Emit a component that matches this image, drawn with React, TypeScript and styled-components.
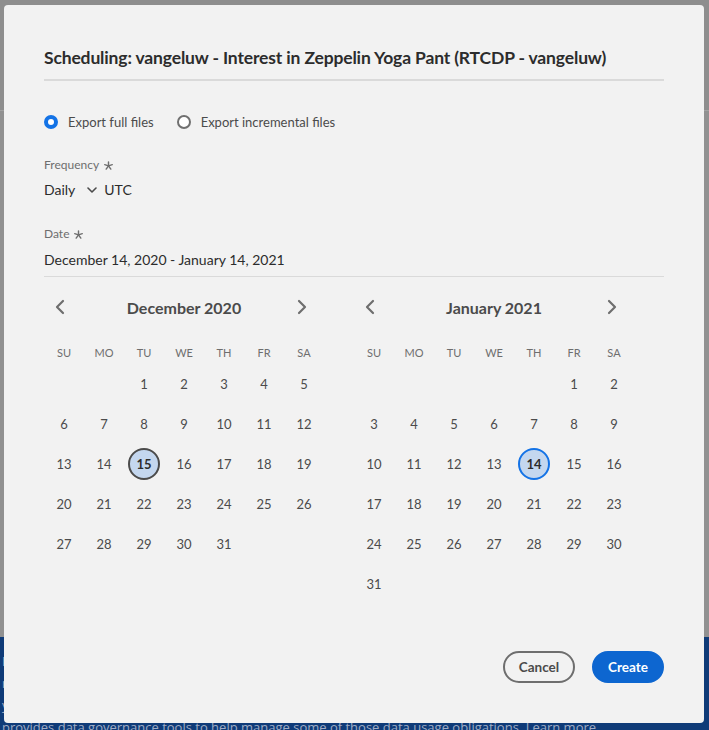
import React from "react";
import styled, { createGlobalStyle } from "styled-components";

const Global = createGlobalStyle`
  html, body { margin: 0; padding: 0; }
  body {
    background: #8f8f8f;
    font-family: Lato, "Open Sans", sans-serif;
    -webkit-font-smoothing: antialiased;
  }
`;

const Page = styled.div`
  position: relative;
  width: 709px;
  height: 730px;
  overflow: hidden;
  display: flex;
  flex-direction: column;
  background: #919191;
`;

const TopBand = styled.div`
  height: 110px;
  background: #8e8e8e;
  border-bottom: 1px solid #a2a2a2;
`;

const Filler = styled.div`
  flex: 1;
`;

const InfoBar = styled.div`
  height: 93px;
  box-sizing: border-box;
  background: #0f3b78;
  padding: 13px 0 0 2px;
  color: #9fabc4;
  font-family: "Open Sans", sans-serif;
  font-size: 13px;
  line-height: 22px;
  white-space: nowrap;
`;

const Dialog = styled.div`
  position: absolute;
  left: 4px;
  top: 5px;
  width: 700px;
  height: 718px;
  box-sizing: border-box;
  background: #f2f2f2;
  border-radius: 4px;
  padding: 40px 40px 40px 40px;
  display: flex;
  flex-direction: column;
  color: #4b4b4b;
`;

const Title = styled.h2`
  margin: 0;
  font-size: 17.5px;
  letter-spacing: -0.15px;
  line-height: 26px;
  font-weight: 700;
  color: #2c2c2c;
  white-space: nowrap;
`;

const Divider = styled.div`
  height: 2px;
  background: #dadada;
  margin-top: 8px;
`;

const RadioGroup = styled.div`
  display: flex;
  align-items: center;
  gap: 23px;
  height: 32px;
  margin-top: 25px;
`;

const RadioItem = styled.label`
  display: flex;
  align-items: center;
  gap: 10px;
  font-size: 13px;
  color: #4b4b4b;
`;

const RadioCircle = styled.span<{ $checked?: boolean }>`
  width: 14px;
  height: 14px;
  box-sizing: border-box;
  border-radius: 50%;
  background: #ffffff;
  border: ${(p) => (p.$checked ? "4px solid #1473e6" : "2px solid #707070")};
`;

const FieldLabel = styled.div<{ $top: number }>`
  display: flex;
  align-items: center;
  gap: 5px;
  margin-top: ${(p) => p.$top}px;
  font-size: 12px;
  line-height: 16px;
  color: #6e6e6e;
`;

const FieldValue = styled.div<{ $underline?: boolean }>`
  display: flex;
  align-items: center;
  margin-top: ${(p) => (p.$underline ? "8px" : "7px")};
  font-size: 14px;
  line-height: 20px;
  color: #2c2c2c;
  padding-bottom: ${(p) => (p.$underline ? "6px" : "0")};
  border-bottom: ${(p) => (p.$underline ? "1px solid #dadada" : "none")};
`;

const Chevron = styled.span`
  display: inline-flex;
  margin: 0 7px 0 12px;
`;

const Calendars = styled.div`
  display: flex;
  gap: 30px;
  margin-top: 14px;
`;

const Month = styled.div`
  width: 280px;
`;

const MonthNav = styled.div`
  display: flex;
  align-items: center;
  justify-content: space-between;
  height: 32px;
  padding-right: 6px;
`;

const NavButton = styled.span`
  width: 32px;
  height: 32px;
  display: flex;
  align-items: center;
  justify-content: center;
`;

const MonthTitle = styled.div`
  font-size: 16px;
  font-weight: 700;
  color: #4b4b4b;
  margin-left: 6px;
`;

const DayGrid = styled.div`
  display: grid;
  grid-template-columns: repeat(7, 40px);
  grid-template-rows: 24px;
  grid-auto-rows: 40px;
  margin-top: 17px;
`;

const WeekDay = styled.div`
  display: flex;
  align-items: center;
  justify-content: center;
  font-size: 11px;
  color: #6e6e6e;
`;

const Day = styled.div`
  display: flex;
  align-items: center;
  justify-content: center;
  font-size: 13px;
  color: #4b4b4b;
`;

const DayNum = styled.span<{ $sel?: "start" | "end" }>`
  width: 32px;
  height: 32px;
  box-sizing: border-box;
  border-radius: 50%;
  display: flex;
  align-items: center;
  justify-content: center;
  background: ${(p) => (p.$sel ? "#c4d7ef" : "transparent")};
  border: ${(p) =>
    p.$sel === "start" ? "2px solid #4b4b4b" : p.$sel === "end" ? "2px solid #1473e6" : "none"};
  font-weight: ${(p) => (p.$sel ? 700 : 400)};
  color: ${(p) => (p.$sel ? "#2c2c2c" : "#4b4b4b")};
`;

const Footer = styled.div`
  margin-top: auto;
  display: flex;
  justify-content: flex-end;
  gap: 17px;
`;

const Button = styled.button<{ $primary?: boolean }>`
  height: 32px;
  box-sizing: border-box;
  border-radius: 16px;
  padding: 0 14px;
  font-family: inherit;
  font-size: 13.5px;
  font-weight: 700;
  border: 2px solid ${(p) => (p.$primary ? "#0d66d0" : "#6e6e6e")};
  background: ${(p) => (p.$primary ? "#0d66d0" : "transparent")};
  color: ${(p) => (p.$primary ? "#ffffff" : "#4b4b4b")};
`;

const Asterisk = () => (
  <svg width="9" height="9" viewBox="0 0 10 10">
    {[0, 72, 144, 216, 288].map((a) => {
      const r = ((a - 90) * Math.PI) / 180;
      return (
        <line
          key={a}
          x1="5"
          y1="5.4"
          x2={5 + 4.4 * Math.cos(r)}
          y2={5.4 + 4.4 * Math.sin(r)}
          stroke="#6e6e6e"
          strokeWidth="1.6"
          strokeLinecap="round"
        />
      );
    })}
  </svg>
);

const ChevronDown = () => (
  <svg width="10" height="6" viewBox="0 0 10 6">
    <path d="M1 1 L5 5 L9 1" fill="none" stroke="#4b4b4b" strokeWidth="1.6" strokeLinecap="round" strokeLinejoin="round" />
  </svg>
);

const NavArrow = ({ dir }: { dir: "left" | "right" }) => (
  <svg width="12" height="16" viewBox="0 0 12 16">
    <path
      d={dir === "left" ? "M9 2 L3 8 L9 14" : "M3 2 L9 8 L3 14"}
      fill="none"
      stroke="#6e6e6e"
      strokeWidth="2.2"
      strokeLinecap="round"
      strokeLinejoin="round"
    />
  </svg>
);

const weekdays = ["SU", "MO", "TU", "WE", "TH", "FR", "SA"];

type MonthProps = {
  title: string;
  offset: number;
  days: number;
  start?: number;
  end?: number;
};

const MonthView = ({ title, offset, days, start, end }: MonthProps) => {
  const cells: (number | null)[] = [];
  for (let i = 0; i < offset; i++) cells.push(null);
  for (let d = 1; d <= days; d++) cells.push(d);
  return (
    <Month>
      <MonthNav>
        <NavButton>
          <NavArrow dir="left" />
        </NavButton>
        <MonthTitle>{title}</MonthTitle>
        <NavButton>
          <NavArrow dir="right" />
        </NavButton>
      </MonthNav>
      <DayGrid>
        {weekdays.map((w) => (
          <WeekDay key={w}>{w}</WeekDay>
        ))}
        {cells.map((d, i) => {
          const sel = d === start ? "start" : d === end ? "end" : undefined;
          return <Day key={i}>{d !== null && <DayNum $sel={sel}>{d}</DayNum>}</Day>;
        })}
      </DayGrid>
    </Month>
  );
};

export default function App() {
  return (
    <Page>
      <Global />
      <TopBand />
      <Filler />
      <InfoBar>
        <div>Data governance lets you manage customer data</div>
        <div>regulations and policies that apply to data</div>
        <div>you collect and use. Experience Platform</div>
        <div>provides data governance tools to help manage some of those data usage obligations. Learn more</div>
      </InfoBar>
      <Dialog>
        <Title>Scheduling: vangeluw - Interest in Zeppelin Yoga Pant (RTCDP - vangeluw)</Title>
        <Divider />
        <RadioGroup>
          <RadioItem>
            <RadioCircle $checked />
            Export full files
          </RadioItem>
          <RadioItem>
            <RadioCircle />
            Export incremental files
          </RadioItem>
        </RadioGroup>
        <FieldLabel $top={19}>
          Frequency <Asterisk />
        </FieldLabel>
        <FieldValue>
          Daily
          <Chevron>
            <ChevronDown />
          </Chevron>
          UTC
        </FieldValue>
        <FieldLabel $top={26}>
          Date <Asterisk />
        </FieldLabel>
        <FieldValue $underline>December 14, 2020 - January 14, 2021</FieldValue>
        <Calendars>
          <MonthView title="December 2020" offset={2} days={31} start={15} />
          <MonthView title="January 2021" offset={5} days={31} end={14} />
        </Calendars>
        <Footer>
          <Button>Cancel</Button>
          <Button $primary>Create</Button>
        </Footer>
      </Dialog>
    </Page>
  );
}
